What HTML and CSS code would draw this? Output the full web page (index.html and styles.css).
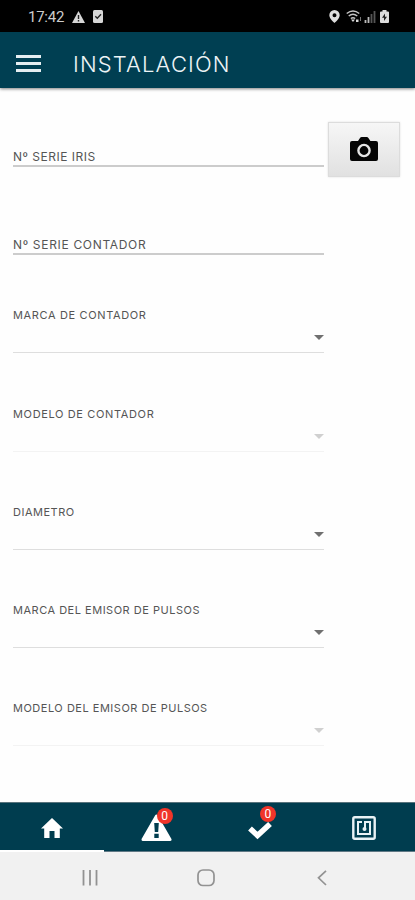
FILE: index.html
```html
<!DOCTYPE html>
<html lang="es">
<head>
<meta charset="utf-8">
<meta name="viewport" content="width=device-width, initial-scale=1">
<title>Instalación</title>
<link rel="stylesheet" href="styles.css">
</head>
<body>
<div class="status">
  <span class="time">17:42</span>
  <svg class="s-warn" width="13" height="12" viewBox="0 0 13 12"><path fill="#d6d6d6" d="M6.5 0 13 12H0z"/><path stroke="#222" stroke-width="1.4" d="M6.5 4v4M6.5 9v1.4"/></svg>
  <svg class="s-check" width="10" height="13" viewBox="0 0 10 13"><rect width="10" height="13" rx="1.5" fill="#d6d6d6"/><path d="m2.3 6.3 2 2 3.7-4" fill="none" stroke="#222" stroke-width="1.4"/></svg>
  <div class="status-right">
    <svg width="11" height="13" viewBox="0 0 11 13"><path fill="#ddd" fill-rule="evenodd" d="M5.5 0A5.2 5.2 0 0 0 .3 5.2C.3 8.700 5.500 13 5.500 13s5.200-4.300 5.200-7.800A5.200 5.200 0 0 0 5.500 0zm0 3.300a2 2 0 1 1 0 4 2 2 0 0 1 0-4z"/></svg>
    <svg class="wifi" width="16" height="13" viewBox="0 0 16 13"><g fill="none" stroke="#c4c4c4" stroke-width="1.500"><path d="M.7 3.500Q7 -1.500 13.300 3.500M2.700 6Q7 2.600 11.300 6M4.800 8.500Q7 6.800 9.200 8.500"/></g><path fill="#d8d8d8" d="m7 12-2-2.500h4zM10 9.500h2.500V12H10z"/><path stroke="#777" d="M14.500 7v4"/></svg>
    <svg class="signal" width="12" height="13" viewBox="0 0 12 13"><path stroke="#bbb" stroke-width="1.800" d="M1.500 13v-3M4.500 13V7"/><path stroke="#555" stroke-width="1.800" d="M7.500 13V4M10.500 13V1"/></svg>
    <svg class="battery" width="9" height="13" viewBox="0 0 9 13"><path fill="#ddd" d="M2.500 0h4v1.500H8q1 0 1 1V12q0 1-1 1H1q-1 0-1-1V2.500q0-1 1-1h1.500z"/><path fill="#222" d="M5 3.500 2 7.700h2V11l3-4.300H5z"/></svg>
  </div>
</div>
<header class="appbar">
  <div class="burger"><i></i><i></i><i></i></div>
  <h1>INSTALACIÓN</h1>
</header>
<main>
  <div class="row">
    <div class="field text iris"><label>Nº SERIE IRIS</label></div>
    <button class="camera" aria-label="Cámara"><svg width="28" height="24" viewBox="0 0 28 24"><path fill="#050505" d="M2 4h6l2-3q.6-1 1.700-1h5q1.100 0 1.700 1l2 3h5.600q2 0 2 2v16q0 2-2 2H2q-2 0-2-2V6q0-2 2-2z"/><circle cx="14" cy="13.500" r="5.600" fill="none" stroke="#e5e5e5" stroke-width="2.400"/></svg></button>
  </div>
  <div class="field text contador"><label>Nº SERIE CONTADOR</label></div>
  <div class="field select marca"><label>MARCA DE CONTADOR</label><b></b></div>
  <div class="field select modelo off"><label>MODELO DE CONTADOR</label><b></b></div>
  <div class="field select diametro"><label>DIAMETRO</label><b></b></div>
  <div class="field select marca-emisor"><label>MARCA DEL EMISOR DE PULSOS</label><b></b></div>
  <div class="field select modelo-emisor off"><label>MODELO DEL EMISOR DE PULSOS</label><b></b></div>
</main>
<nav class="tabs">
  <a class="active"><svg width="22" height="20" viewBox="0 0 22 20"><path fill="#fff" d="M11 0 22 10.500h-3.200V20h-5.300v-7h-5v7H3.200v-9.500H0l11-10.500z"/></svg></a>
  <a><span class="icon"><svg width="31" height="28" viewBox="0 0 31 28"><path fill="#fff" stroke="#fff" stroke-width="3" stroke-linejoin="round" d="M15.500 2 29 25.500H2z"/><path fill="#003d4f" d="M13.200 9h4.600l-.6 9h-3.400zM13.300 19.700h4.400V24h-4.400z"/></svg><em>0</em></span></a>
  <a><span class="icon check"><svg width="26" height="18" viewBox="0 0 26 18"><path fill="none" stroke="#fff" stroke-width="5.500" d="m3 6.500 7.500 7L23 2"/></svg><em>0</em></span></a>
  <a><svg class="nfc" width="24" height="24" viewBox="0 0 24 24"><g fill="none" stroke="#e9f2f5"><rect x="1.300" y="1.300" width="21.400" height="21.400" rx="1.500" stroke-width="2.400"/><path stroke-width="2" d="M10 6H6v12h12V6h-5v7"/></g><circle cx="12.500" cy="13" r="2" fill="#e9f2f5"/></svg></a>
</nav>
<footer class="sysnav">
  <svg width="16" height="16" viewBox="0 0 16 16"><path stroke="#929292" stroke-width="1.800" d="M1.500 0v15.500M8 0v15.500M14.500 0v15.500"/></svg>
  <svg class="home-key" width="18" height="18" viewBox="0 0 18 18"><rect x="1" y="1" width="16" height="15.500" rx="5" fill="none" stroke="#929292" stroke-width="1.700"/></svg>
  <svg width="10" height="16" viewBox="0 0 10 16"><path fill="none" stroke="#929292" stroke-width="1.700" d="M9 .8 1.500 7.800 9 15"/></svg>
</footer>
</body>
</html>
```
FILE: styles.css
```css
* { box-sizing: border-box; }
body { margin: 0; width: 415px; height: 900px; overflow: hidden; display: flex; flex-direction: column; background: #fefefe; font-family: Inter, "Liberation Sans", sans-serif; }
svg { display: block; flex: none; }
.status { height: 32px; flex: none; background: #000; display: flex; align-items: center; padding: 1px 26px 0 28px; color: #ccc; }
.time { font: 15px/18px Roboto, sans-serif; width: 44px; letter-spacing: -.25px; }
.s-check { margin-left: 8px; }
.status-right { display: flex; margin-left: auto; }
.wifi { margin-left: 6px; }
.signal { margin-left: 2px; }
.battery { margin-left: 4px; }
.appbar { height: 56px; flex: none; background: #003f52; display: flex; align-items: center; padding: 0 16px; box-shadow: 0 1px 3px rgba(0,0,0,.5); }
.burger { width: 25px; display: grid; gap: 4px; margin-top: 6px; }
.burger i { height: 3px; background: #e5eef1; }
h1 { margin: 7px 0 0 32px; font-size: 22px; line-height: 30px; font-weight: 300; letter-spacing: 1.150px; color: #edf4f6; white-space: nowrap; }
main { flex: 1; padding: 34px 13px 0; }
.row { display: flex; justify-content: space-between; margin-right: 2px; height: 55px; }
.field { position: relative; width: 311px; color: #555; display: flex; white-space: nowrap; }
.field label { line-height: 16px; }
.text { align-items: flex-end; border-bottom: 2px solid #ccc; font-size: 12px; }
.iris { height: 45px; }
.contador { height: 40px; margin-top: 38px; }
.camera { width: 72px; height: 55px; padding: 0 0 1px; display: grid; place-items: center; border: 1px solid #dcdcdc; background: linear-gradient(#f6f6f6, #e1e1e1); box-shadow: 0 0 2px rgba(0,0,0,.12); }
.select { height: 46px; margin-top: 52.300px; border-bottom: 1px solid #dedede; font-size: 11px; justify-content: space-between; }
.select b { align-self: flex-end; margin-bottom: 12px; border: 5px solid transparent; border-top-color: #707070; border-bottom: 0; }
.off { border-bottom-color: #f3f3f3; }
.off b { border-top-color: #d0d0d0; }
.iris label { letter-spacing: .5px; }
.contador label { letter-spacing: .68px; }
.marca label, .modelo label { letter-spacing: .64px; }
.diametro label, .marca-emisor label, .modelo-emisor label { letter-spacing: .51px; }
.tabs { height: 50px; flex: none; background: #003d4f; display: grid; grid-template-columns: repeat(4, 1fr); border-top: 1px solid #58737c; }
.tabs a { display: grid; place-items: center; border-bottom: 1px solid #607985; padding: 2px 0 0 1px; }
.tabs .active { border-bottom: 2px solid #fff; }
.icon { position: relative; }
.icon em { position: absolute; right: -1px; top: -6px; width: 16px; height: 16px; border-radius: 50%; background: #f03529; color: #fff; font: 12px/16px Roboto, sans-serif; text-align: center; }
.check em { right: -3px; top: -16px; }
.check { top: 3px; }
.sysnav { height: 48px; flex: none; background: #f1f1f1; display: flex; align-items: center; justify-content: space-between; padding: 4px 88px 0 82px; }
.home-key { margin-right: 4px; }
```
